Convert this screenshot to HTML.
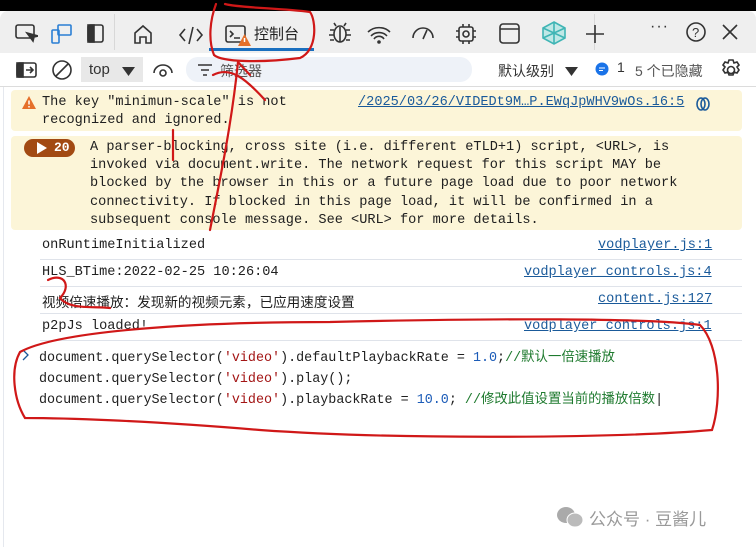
<!DOCTYPE html>
<html><head><meta charset="utf-8"><style>
*{margin:0;padding:0;box-sizing:border-box}
body{width:756px;height:547px;overflow:hidden;background:#fff;font-family:"Liberation Sans","Noto Sans CJK SC",sans-serif;position:relative}
.abs{position:absolute}
.mono{font-family:"Liberation Mono","Noto Sans CJK SC",monospace;font-size:13.6px;color:#202020}
.link{color:#1a5a9a;text-decoration:underline}
svg.i{position:absolute;fill:none;stroke:#333;stroke-width:1.6}
.line{position:absolute;left:40px;right:14px;height:1px;background:#dfe3ea}
</style></head><body>
<div class="abs" style="left:0;top:0;width:756px;height:11px;background:#000"></div>
<div class="abs" style="left:0;top:11px;width:756px;height:42px;background:#efefef;border-radius:8px 8px 0 0"></div>
<div class="abs" style="left:114px;top:14px;width:1px;height:36px;background:#d8d8d8"></div>
<div class="abs" style="left:594px;top:14px;width:1px;height:36px;background:#d8d8d8"></div>
<!-- tab icons -->
<svg class="i" style="left:14px;top:22px" width="24" height="22"><rect x="2" y="3" width="18" height="13" rx="2"/><path d="M13 11l6 8 1-4 4-1z" fill="#333"/></svg>
<svg class="i" style="left:50px;top:22px;stroke:#2a7fd4" width="24" height="24"><rect x="2" y="8" width="7" height="13" rx="1"/><rect x="8" y="3" width="13" height="10" rx="1"/></svg>
<svg class="i" style="left:86px;top:23px" width="20" height="22"><rect x="2" y="2" width="15" height="17" rx="2"/><rect x="2" y="2" width="6" height="17" fill="#333"/></svg>
<svg class="i" style="left:132px;top:23px" width="22" height="22"><path d="M3 10L11 3l8 7v10h-5v-6H8v6H3z"/></svg>
<svg class="i" style="left:178px;top:24px" width="26" height="22"><path d="M7 5L2 11l5 6M19 5l5 6-5 6M15 3l-4 17"/></svg>
<svg class="i" style="left:224px;top:23px" width="24" height="22"><rect x="2" y="3" width="19" height="16" rx="2"/><path d="M6 8l3 3-3 3M10 15h6"/></svg>
<svg style="position:absolute;left:238px;top:34px" width="13" height="12"><path d="M6.5 0L13 12H0z" fill="#e5702a"/><path d="M6.5 4v4" stroke="#fff" stroke-width="1.5"/></svg>
<div class="abs" style="left:254px;top:23px;font-size:15px;color:#222">控制台</div>
<div class="abs" style="left:209px;top:48px;width:105px;height:3px;background:#1a6fbf"></div>
<svg class="i" style="left:328px;top:20px" width="24" height="26"><ellipse cx="12" cy="14" rx="6" ry="8"/><path d="M6 10H2M6 15H1M6 20H2M18 10h4M18 15h5M18 20h4M8 6L6 3M16 6l2-3M12 7v15"/></svg>
<svg class="i" style="left:366px;top:24px" width="26" height="20"><path d="M2 8a16 16 0 0 1 22 0M5 12a11 11 0 0 1 16 0M8 15a6 6 0 0 1 10 0"/><circle cx="13" cy="18" r="1" fill="#333"/></svg>
<svg class="i" style="left:410px;top:24px" width="26" height="20"><path d="M3 14a10 10 0 0 1 20 0M13 15l4-9"/></svg>
<svg class="i" style="left:454px;top:22px" width="24" height="24"><rect x="5" y="5" width="14" height="14" rx="2"/><circle cx="12" cy="12" r="3"/><path d="M9 2v3M15 2v3M9 19v3M15 19v3M2 9h3M2 15h3M19 9h3M19 15h3"/></svg>
<svg class="i" style="left:498px;top:22px" width="24" height="24"><rect x="2" y="2" width="19" height="19" rx="3"/><path d="M2 7h19"/></svg>
<svg class="i" style="left:540px;top:20px;stroke:#3fb5b5" width="28" height="26"><path d="M14 2l11 6v10l-11 6-11-6V8z" fill="#bfe8e6"/><path d="M14 2v22M3 8l22 10M25 8L3 18"/></svg>
<svg class="i" style="left:584px;top:23px" width="22" height="22"><path d="M11 2v18M2 11h18"/></svg>
<div class="abs" style="left:650px;top:18px;font-size:16px;color:#333;letter-spacing:1px">···</div>
<svg class="i" style="left:685px;top:21px" width="22" height="22"><circle cx="11" cy="11" r="9"/><text x="7" y="16" font-size="13" fill="#333" stroke="none" font-family="Liberation Sans">?</text></svg>
<svg class="i" style="left:720px;top:22px" width="20" height="20"><path d="M3 3l14 14M17 3L3 17"/></svg>
<!-- filter bar -->
<div class="abs" style="left:0;top:86px;width:756px;height:1px;background:#dcdcdc"></div>
<svg class="i" style="left:16px;top:61px" width="22" height="18"><rect x="1" y="2" width="19" height="14" rx="2"/><rect x="1" y="2" width="6" height="14" fill="#333"/><path d="M10 9h7M14 6l3 3-3 3"/></svg>
<svg class="i" style="left:51px;top:59px" width="22" height="22"><circle cx="11" cy="11" r="9"/><path d="M5 17L17 5"/></svg>
<div class="abs" style="left:81px;top:57px;width:62px;height:25px;background:#e8e8e8"></div>
<div class="abs" style="left:89px;top:61px;font-size:15px;color:#333">top</div>
<svg style="position:absolute;left:122px;top:67px" width="13" height="9"><path d="M0 0h13L6.5 9z" fill="#333"/></svg>
<svg class="i" style="left:152px;top:61px" width="22" height="18"><path d="M2 12a9 8 0 0 1 18 0"/><circle cx="11" cy="12" r="3"/></svg>
<div class="abs" style="left:186px;top:57px;width:286px;height:25px;background:#eef2f8;border-radius:12px"></div>
<svg class="i" style="left:197px;top:63px" width="16" height="14"><path d="M1 2h14M4 7h8M6 12h4"/></svg>
<div class="abs" style="left:220px;top:61px;font-size:14px;color:#555">筛选器</div>
<div class="abs" style="left:498px;top:61px;font-size:14px;color:#333">默认级别</div>
<svg style="position:absolute;left:565px;top:67px" width="13" height="9"><path d="M0 0h13L6.5 9z" fill="#333"/></svg>
<svg style="position:absolute;left:595px;top:62px" width="14" height="14"><circle cx="7" cy="7" r="6.5" fill="#1a73e8"/><path d="M4 6h6M4 8.5h4" stroke="#fff"/></svg>
<div class="abs" style="left:617px;top:59px;font-size:14px;color:#333">1</div>
<div class="abs" style="left:635px;top:61px;font-size:14px;color:#555">5 个已隐藏</div>
<svg class="i" style="left:719px;top:58px" width="24" height="24"><circle cx="12" cy="12" r="3.5"/><path d="M10 2h4l1 3 3-1 2 3-2 2 2 3-2 3-3-1-1 3h-4l-1-3-3 1-2-3 2-3-2-2 2-3 3 1z"/></svg>
<!-- left border -->
<div class="abs" style="left:3px;top:87px;width:1px;height:460px;background:#e5e8ee"></div>
<!-- warning 1 -->
<div class="abs" style="left:11px;top:90px;width:731px;height:41px;background:#fcf5d8;border-radius:4px"></div>
<svg style="position:absolute;left:22px;top:96px" width="14" height="13"><path d="M7 0L14 13H0z" fill="#e5702a"/><path d="M7 4.5v4M7 10v1.5" stroke="#fff" stroke-width="1.5"/></svg>
<div class="abs mono" style="left:42px;top:94px;line-height:18px">The key "minimun-scale" is not<br>recognized and ignored.</div>
<div class="abs mono link" style="left:358px;top:94px;line-height:18px">/2025/03/26/VIDEDt9M…P.EWqJpWHV9wOs.16:5</div>
<svg class="i" style="left:695px;top:96px;stroke:#1a5a9a" width="16" height="16"><ellipse cx="6" cy="8" rx="4" ry="6"/><ellipse cx="10" cy="8" rx="4" ry="6"/></svg>
<!-- warning 2 -->
<div class="abs" style="left:11px;top:136px;width:731px;height:94px;background:#fcf5d8;border-radius:4px"></div>
<div class="abs" style="left:24px;top:139px;width:51px;height:18px;background:#a24a13;border-radius:9px"></div>
<svg style="position:absolute;left:37px;top:142px" width="10" height="12"><path d="M0 0L10 6 0 12z" fill="#fff"/></svg>
<div class="abs" style="left:54px;top:140px;font-size:13px;font-weight:bold;color:#fff;font-family:'Liberation Mono',monospace">20</div>
<div class="abs mono" style="left:90px;top:139px;line-height:18.2px;white-space:pre">A parser-blocking, cross site (i.e. different eTLD+1) script, &lt;URL&gt;, is
invoked via document.write. The network request for this script MAY be
blocked by the browser in this or a future page load due to poor network
connectivity. If blocked in this page load, it will be confirmed in a
subsequent console message. See &lt;URL&gt; for more details.</div>
<!-- logs -->
<div class="abs mono" style="left:42px;top:238px">onRuntimeInitialized</div>
<div class="abs mono link" style="left:598px;top:238px">vodplayer.js:1</div>
<div class="line" style="top:259px"></div>
<div class="abs mono" style="left:42px;top:265px">HLS_BTime:2022-02-25 10:26:04</div>
<div class="abs mono link" style="left:524px;top:265px">vodplayer_controls.js:4</div>
<div class="line" style="top:286px"></div>
<div class="abs mono" style="left:42px;top:291px">视频倍速播放：发现新的视频元素，已应用速度设置</div>
<div class="abs mono link" style="left:598px;top:292px">content.js:127</div>
<div class="line" style="top:313px"></div>
<div class="abs mono" style="left:42px;top:319px">p2pJs loaded!</div>
<div class="abs mono link" style="left:524px;top:319px">vodplayer_controls.js:1</div>
<div class="line" style="top:340px"></div>
<svg class="i" style="left:22px;top:349px;stroke:#1a5a9a;stroke-width:1.3" width="8" height="12"><path d="M1 1l5 5-5 5"/></svg>
<div class="abs mono" style="left:39px;top:348px;line-height:21px;white-space:pre;font-size:13.4px">document.querySelector(<span style="color:#a31515">'video'</span>).defaultPlaybackRate = <span style="color:#1c5cb8">1.0</span>;<span style="color:#1e7a2e">//默认一倍速播放</span>
document.querySelector(<span style="color:#a31515">'video'</span>).play();
document.querySelector(<span style="color:#a31515">'video'</span>).playbackRate = <span style="color:#1c5cb8">10.0</span>; <span style="color:#1e7a2e">//修改此值设置当前的播放倍数</span>|</div>
<!-- watermark -->
<svg style="position:absolute;left:556px;top:505px" width="28" height="24"><ellipse cx="10" cy="10" rx="9" ry="8" fill="#aaa"/><ellipse cx="19" cy="15" rx="8" ry="7" fill="#bbb" stroke="#fff"/></svg>
<div class="abs" style="left:589px;top:505px;font-size:17px;color:#999">公众号 · 豆酱儿</div>
<!-- red annotations -->
<svg style="position:absolute;left:0;top:0" width="756" height="547" fill="none" stroke="#d01818" stroke-width="2.2" stroke-linecap="round">
<path d="M216 4C210 20 208 40 214 55 222 62 260 63 300 58 318 50 316 20 310 12 280 8 240 8 225 4"/>
<path d="M238 62C232 120 222 170 210 230"/>
<path d="M173 130V160"/>
<path d="M213 75C230 66 245 78 265 100"/>
<path d="M238 62L250 75"/>
<path d="M48 280C64 272 72 286 60 298 70 310 92 306 110 308"/>
<path d="M20 352C60 330 200 322 330 322 500 318 650 318 700 325 720 345 722 400 712 430 620 438 400 440 260 430 140 420 60 418 25 418 14 400 10 370 20 352"/>
</svg>
</body></html>
